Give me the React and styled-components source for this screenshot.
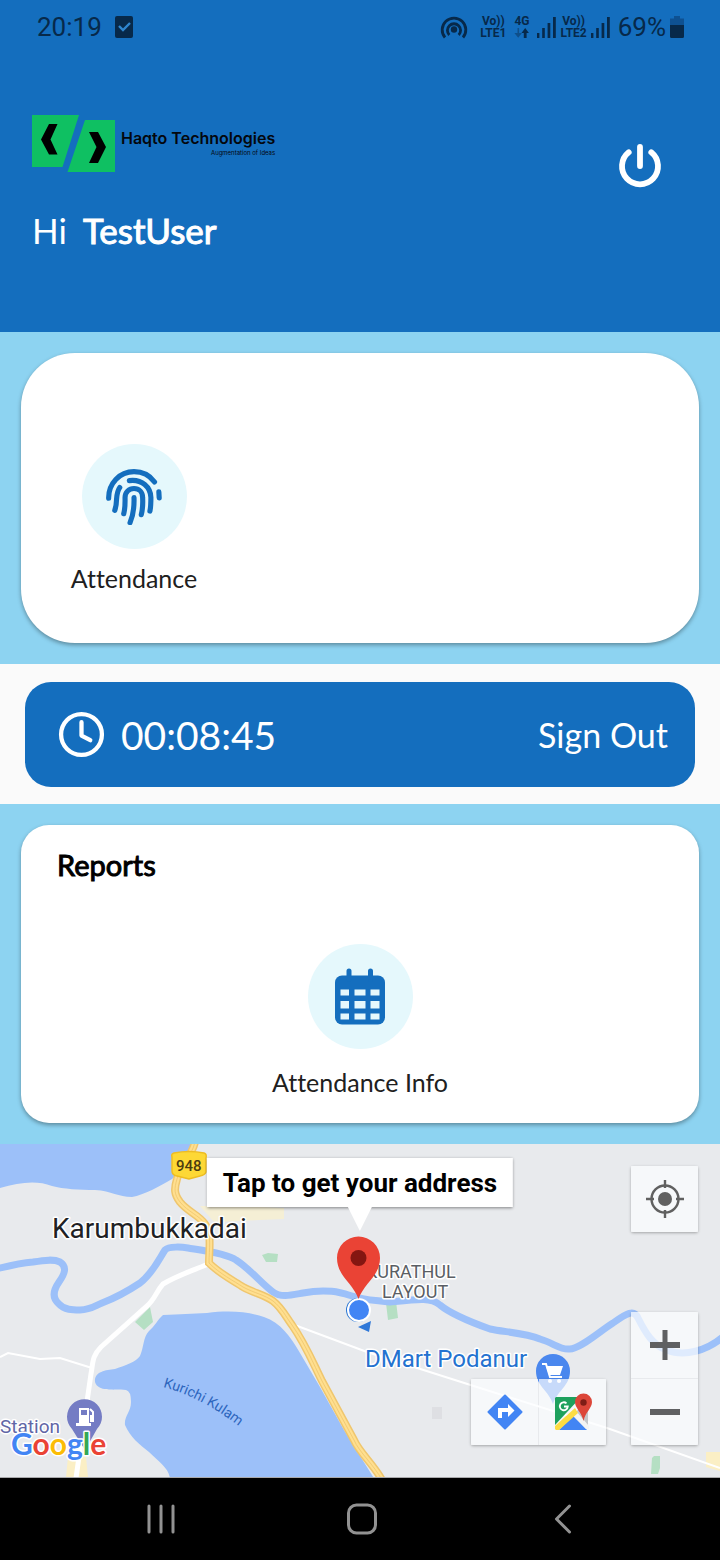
import React from "react";
import styled, { createGlobalStyle } from "styled-components";

const blue = "#146ebe";
const sky = "#8dd3f1";
const ink = "#07294a";

const GlobalStyle = createGlobalStyle`
  * { box-sizing: border-box; }
  body {
    margin: 0;
    background: #fafafa;
    font-family: Lato, "Open Sans", sans-serif;
    font-variant-ligatures: none;
  }
  button { border: 0; padding: 0; background: none; color: inherit; font: inherit; font-variant-ligatures: none; cursor: pointer; }
  svg { display: block; }
  h1, h2, p { margin: 0; }
`;

const Screen = styled.div`
  display: flex;
  flex-direction: column;
  min-height: 100vh;
`;

const Hero = styled.header`
  background: ${blue};
  color: #fff;
  padding-bottom: 80px;
`;

const StatusBar = styled.div`
  display: flex;
  align-items: center;
  justify-content: space-between;
  height: 54px;
  padding: 0 36px 0 37px;
  color: ${ink};
  font-family: Roboto, sans-serif;
`;

const StatusGroup = styled.div`
  display: flex;
  align-items: center;
  gap: ${(p) => p.$gap}px;
`;

const StatusText = styled.span`
  font-size: 26px;
  line-height: 32px;
`;

const Network = styled.span`
  display: flex;
  flex-direction: column;
  align-items: center;
  font-size: 12px;
  font-weight: 700;
  line-height: 12px;
`;

const HeroBody = styled.div`
  display: flex;
  justify-content: space-between;
  align-items: flex-start;
  padding: 61px 56px 0 32px;
`;

const Brand = styled.div`
  display: flex;
  gap: 6px;
`;

const BrandText = styled.div`
  display: flex;
  flex-direction: column;
  align-items: flex-end;
  padding-top: 13px;
  color: #04070d;
`;

const BrandName = styled.span`
  font: 600 16px/21px Inter, sans-serif;
`;

const BrandLine = styled.span`
  font: 400 6px/8px Inter, sans-serif;
`;

const Greeting = styled.h1`
  margin-top: 35px;
  font-size: 35px;
  font-weight: 400;
  line-height: 44px;
`;

const UserName = styled.span`
  margin-left: 16px;
  -webkit-text-stroke: 1px #fff;
`;

const PowerButton = styled.button`
  margin-top: 27px;
`;

const Section = styled.section`
  padding: 21px;
  background: ${sky};
`;

const Card = styled.div`
  display: flex;
  flex-direction: column;
  height: ${(p) => p.$height}px;
  border-radius: ${(p) => p.$radius}px;
  background: #fff;
  box-shadow: 0 2px 4px rgba(0, 0, 0, 0.35);
`;

const CardTitle = styled.h2`
  padding: 22px 36px 0;
  color: #000;
  font-size: 29px;
  font-weight: 400;
  line-height: 36px;
  -webkit-text-stroke: 1px #000;
`;

const Tile = styled.button`
  display: flex;
  flex-direction: column;
  align-items: center;
  align-self: ${(p) => p.$align};
  gap: ${(p) => p.$gap}px;
  width: 226px;
  margin-top: ${(p) => p.$top}px;
  color: #202020;
  font-size: 25px;
  line-height: 32px;
`;

const Disc = styled.span`
  display: grid;
  place-items: center;
  width: 105px;
  height: 105px;
  border-radius: 50%;
  background: #e5f8fc;
`;

const TimerStrip = styled.section`
  padding: 18px 25px 17px;
  background: #fafafa;
`;

const TimerBar = styled.div`
  display: flex;
  align-items: center;
  justify-content: space-between;
  height: 105px;
  padding: 0 27px 0 32px;
  border-radius: 26px;
  background: ${blue};
  color: #fff;
`;

const Timer = styled.div`
  display: flex;
  align-items: center;
  gap: 15px;
  font-size: 39px;
  line-height: 48px;
`;

const SignOut = styled.button`
  font-size: 34px;
  line-height: 44px;
`;

const MapPanel = styled.section`
  position: relative;
  height: 334px;
  overflow: hidden;
  border-bottom: 1px solid #a9a9ab;
  background: #e8eaed;
`;

const MapDrawing = styled.svg`
  width: 100%;
  height: 333px;
  font-family: Roboto, sans-serif;
`;

const Callout = styled.button`
  position: absolute;
  top: 14px;
  left: 50%;
  padding: 9px 16px 7px;
  transform: translateX(-50%);
  background: #fff;
  box-shadow: 0 1px 3px rgba(0, 0, 0, 0.45);
  color: #000;
  font: 700 26px/33px Roboto, sans-serif;
  white-space: nowrap;

  &::after {
    content: "";
    position: absolute;
    top: 100%;
    left: 50%;
    border: solid transparent;
    border-width: 24px 12px 0;
    border-top-color: #fff;
    transform: translateX(-50%);
  }
`;

const Controls = styled.div`
  position: absolute;
  inset: 0;
  display: flex;
  flex-direction: column;
  align-items: flex-end;
  justify-content: space-between;
  padding: 22px 22px 32px;
  pointer-events: none;
`;

const ControlRow = styled.div`
  display: flex;
  align-items: flex-end;
  gap: 25px;
`;

const ControlGroup = styled.div`
  display: flex;
  flex-direction: ${(p) => (p.$vertical ? "column" : "row")};
  gap: 1px;
  border-radius: 2px;
  box-shadow: 0 1px 3px rgba(0, 0, 0, 0.3);
`;

const MapButton = styled.button`
  display: grid;
  place-items: center;
  width: 67px;
  height: 66px;
  background: rgba(252, 253, 255, 0.7);
  pointer-events: auto;
`;

const NavBar = styled.nav`
  display: grid;
  grid-template-columns: repeat(3, 1fr);
  place-items: center;
  flex: 1;
  min-height: 82px;
  padding: 0 56px 0 60px;
  background: #000;
`;

const TaskIcon = () => (
  <svg width="18" height="22" viewBox="0 0 18 22">
    <rect width="18" height="22" rx="2" fill={ink} />
    <path d="M4 10l4 4 7-7" fill="none" stroke="#2f86cf" strokeWidth="2.4" />
  </svg>
);

const HotspotIcon = () => (
  <svg width="28" height="24" viewBox="0 0 28 24" fill="none" stroke={ink} strokeWidth="2.8">
    <path d="M5 22.500A11.800 11.800 0 1 1 23 22.500" />
    <path d="M9.300 20A6.600 6.600 0 1 1 18.700 20" />
    <circle cx="14" cy="14.500" r="3.200" fill={ink} stroke="none" />
  </svg>
);

const SignalIcon = () => (
  <svg width="19" height="21" viewBox="0 0 19 21" fill={ink}>
    <path d="M0 16h2.400v5H0zM5.200 11h2.600v10H5.200zM10.600 6h2.700v15h-2.700zM16 0h2.800v21H16z" />
  </svg>
);

const ArrowsIcon = () => (
  <svg width="15" height="12" viewBox="0 0 15 12">
    <path d="M3.500 1h1.600v5H8l-3.800 4.800L.4 6h3.100z" fill="#0f4f8a" />
    <path d="M9.800 11h2.800V6h2.300L11.200 1 7.500 6h2.300z" fill={ink} />
  </svg>
);

const BatteryIcon = () => (
  <svg width="14" height="22" viewBox="0 0 14 22">
    <path d="M4 0h6v2.500h4V9H0V2.500h4z" fill="#0e5192" />
    <path d="M0 9h14v11.500a1.500 1.500 0 0 1-1.500 1.500h-11A1.500 1.500 0 0 1 0 20.500z" fill={ink} />
  </svg>
);

const LogoMark = () => (
  <svg width="83" height="58" viewBox="0 0 83 58">
    <path d="M0 0h47L30.500 52H0z" fill="#0fc062" />
    <path d="M53 5h30v52H35.500z" fill="#0fc062" />
    <path d="M17 9h8.500l-7 15.500 7 15H17L9 24.500z" fill="#000" />
    <path d="M57 17h9l8 15-8 16h-9l7.500-16z" fill="#000" />
  </svg>
);

const PowerIcon = () => (
  <svg width="48" height="48" viewBox="0 0 48 48" fill="none" stroke="#fff" strokeWidth="5.800" strokeLinecap="round">
    <path d="M12.700 10.300a18 18 0 1 0 22.600 0" />
    <path d="M24 5v19" />
  </svg>
);

const FingerprintIcon = () => (
  <svg width="56" height="56" viewBox="258 146 168 169" fill="none" stroke={blue} strokeWidth="15.500" strokeLinecap="round">
    <path d="M265.500 234C265 190 298 154 342 154C368 154 390 166 404 185" />
    <path d="M417 215l1 18" />
    <path d="M328 181C366 176 392 201 393 232C393 246 393 260 390 273" />
    <path d="M299 202C290 214 290 230 289 242C289 253 287 262 284 271" />
    <path d="M311 281C316 262 315 247 315 232C315 216 327 205 342 205C357 205 368 216 368 232C369 250 368 268 364 284" />
    <path d="M342 232C343 262 338 290 330 308" />
  </svg>
);

const CalendarIcon = () => (
  <svg width="50" height="57" viewBox="0 0 50 57">
    <rect y="7.500" width="50" height="49" rx="7" fill={blue} />
    <path d="M14 3v8M35.500 3v8" stroke={blue} strokeWidth="5" strokeLinecap="round" />
    <g fill="#e5f8fc">
      {[21.5, 33, 45.5].map((y) => (
        <path key={y} d={`M5.500 ${y}h8.500v${y === 33 ? 7.5 : 6}h-8.500zM19.500 ${y}h11v${y === 33 ? 7.5 : 6}h-11zM35.500 ${y}h9v${y === 33 ? 7.5 : 6}h-9z`} />
      ))}
    </g>
  </svg>
);

const ClockIcon = () => (
  <svg width="49" height="49" viewBox="0 0 24 24" fill="none" stroke="#fff" strokeWidth="2.100" strokeLinecap="round" strokeLinejoin="round">
    <circle cx="12" cy="12" r="10" />
    <path d="M12 6v6.500l4.300 2.300" />
  </svg>
);

const LocateIcon = () => (
  <svg width="38" height="38" viewBox="0 0 38 38" fill="none" stroke="#606060" strokeWidth="2.400">
    <circle cx="19" cy="19" r="13.500" />
    <circle cx="19" cy="19" r="7" fill="#606060" stroke="none" />
    <path d="M19 0v8M19 30v8M0 19h8M30 19h8" />
  </svg>
);

const ZoomIcon = ({ plus }) => (
  <svg width="30" height="30" viewBox="0 0 30 30" fill="#5f6062">
    <path d="M0 12h30v6H0z" />
    {plus && <path d="M12.500 0h5v30h-5z" />}
  </svg>
);

const DirectionsIcon = () => (
  <svg width="36" height="36" viewBox="0 0 36 36">
    <path d="M18 1.500L34.500 18 18 34.500 1.500 18z" fill="#4285f4" stroke="#4285f4" strokeWidth="2" strokeLinejoin="round" />
    <path d="M11 24V14h10v-4l6.500 6.500L21 23v-5h-6v6z" fill="#fff" />
  </svg>
);

const GoogleMapsIcon = () => (
  <svg width="38" height="38" viewBox="0 0 38 38">
    <path d="M2 4h25L1 32V5z" fill="#1fa15d" />
    <path d="M26 14h8v21L20 22z" fill="#c4c6ca" />
    <path d="M19 22l14 15H5z" fill="#4285f4" />
    <path d="M22 18L35 33v3h-3L18 22z" fill="#f3f3f3" />
    <path d="M21 15l3 5L5 37H2l-1-1v-3z" fill="#fcdc42" />
    <path d="M12.500 10.300a4 4 0 1 0 1.300 3.200H10" fill="none" stroke="#fff" strokeWidth="1.800" />
    <path d="M21 9a8.500 8.500 0 0 1 17 0c0 6-6.500 10-8.500 19C27.500 19 21 15 21 9z" fill="#dc4639" />
    <circle cx="29.500" cy="9.500" r="3.200" fill="#7f1d16" />
  </svg>
);

const river =
  "M-4 125C12 121 22 119 33 118C45 116 54 115 60 118C68 123 64 131 59 138C52 148 53 155 59 160C64 166 73 166 80 166C90 166 95 162 102 159C115 154 128 147 140 139C153 129 159 115 165 106C169 102 182 103 188 104C200 106 226 109 236 116C250 125 262 140 273 148C281 154 292 151 303 149C328 144 342 149 352 152C362 156 372 156 390 158C418 155 431 153 440 161C452 171 476 180 490 185C504 188 526 189 540 195C553 199 561 206 569 205C579 206 600 187 613 179C627 169 634 165 638 174C645 188 653 202 667 206C684 213 707 207 724 192";
const highway =
  "M195 -2C192 12 180 22 177 35C174 45 174 50 180 58C188 68 199 71 205 80C212 90 209 105 209 119C220 130 234 137 243 143C254 149 265 151 273 157C282 164 286 173 292 181C306 201 313 219 322 237L354 296C359 308 374 321 382 336";
const lake =
  "M163 171C180 170 192 170 207 169C230 166 250 168 264 173C281 179 290 192 300 209L320 243L344 286L375 336H170C170 325 160 319 149 308C140 301 130 293 125 281C124 272 131 268 131 258Q131 247 126 246C113 245 98 248 95 238C94 228 105 226 115 225C126 221 136 218 140 212C144 203 143 193 149 187C155 182 158 175 163 171Z";

const MapArtwork = () => (
  <MapDrawing viewBox="0 0 720 333" preserveAspectRatio="xMidYMid slice" role="img" aria-label="Map around Karumbukkadai">
    <path d="M200 62Q240 62 284 64V75L214 78Z" fill="#f5efd5" />
    <path d="M706 308h14v19l-14-4zM68 313h18l2 20H66z" fill="#fbefc5" />
    <path d="M0 0H194L186 22L172 35C160 42 144 51 132 53C118 53 112 47 95 46C80 46 63 45 52 42C37 36 20 38 0 44Z" fill="#9cc0f9" />
    <g fill="#b5dfc3">
      <path d="M135 178l15-15 3 15-9 8zM262 111l6-2 10 1-1 8-11 0zM386 159l10-2 2 17-10 2zM652 314l2-2h6v12l-2 6h-7z" />
    </g>
    <path d="M432 263h10v12h-10z" fill="#dedfe3" />
    <path d={lake} fill="#9cc0f9" />
    <path d={river} fill="none" stroke="#9cc0f9" strokeWidth="7" />
    <g fill="none" stroke="#fff">
      <path d="M208 120C192 127 178 131 163 140C156 148 155 155 147 162L101 203C92 212 93 219 91 230L76 334" strokeWidth="5" />
      <path d="M0 213L8 209L40 215L60 214L92 224" strokeWidth="2" />
      <path d="M292 180L367 208L480 244L607 284L720 324" strokeWidth="2" />
    </g>
    <path d={highway} fill="none" stroke="#efc66e" strokeWidth="8" />
    <path d={highway} fill="none" stroke="#ffdf8f" strokeWidth="5" />
    <path d={highway} fill="none" stroke="#f2cb76" strokeWidth="1" />

    <path d="M174 9Q189 6 204 9Q207 10 206 14V28Q205 31 200 32L189 35L177 32Q172 31 172 27V13Q171 10 174 9Z" fill="#fdd835" stroke="#eebd22" strokeWidth="1.500" />
    <text x="176" y="27" fontSize="15" fontWeight="500" fill="#4c3c10">948</text>

    <path d="M85 306L72 285A17.500 17.500 0 1 1 97 285Z" fill="#747cc4" />
    <g fill="#fff">
      <path d="M79 264h10v15h2v3H76v-3h3zM81 266v5h6v-5z" fillRule="evenodd" />
      <path d="M90 265l3 3v9h-2v-6" fill="none" stroke="#fff" strokeWidth="2" />
    </g>

    <g stroke="#fff" strokeWidth="3" strokeLinejoin="round" paintOrder="stroke">
      <text x="52" y="94" fontSize="28" fill="#202124">Karumbukkadai</text>
      <text x="0" y="289" fontSize="19" fill="#6166a6">Station</text>
      <text x="366" y="134" fontSize="18" fill="#5a5e64">KURATHUL</text>
      <text x="382" y="154" fontSize="18" fill="#5a5e64">LAYOUT</text>
      <text x="365" y="223" fontSize="24" fill="#2472d0">DMart Podanur</text>
    </g>
    <path id="lake-label" d="M163 243Q205 254 246 288" fill="none" />
    <text fontSize="14" fill="#2c65bd">
      <textPath href="#lake-label">Kurichi Kulam</textPath>
    </text>

    <path d="M553 260C549 247 536 242 536 227A17 17 0 1 1 570 227C570 242 557 247 553 260Z" fill="#4a87ee" />
    <path d="M546 222h17l-3 9h-11z" fill="#fff" />
    <path d="M542 220h4l4 13h12" fill="none" stroke="#fff" strokeWidth="2" />
    <circle cx="550" cy="237" r="2" fill="#fff" />
    <circle cx="559" cy="237" r="2" fill="#fff" />

    <path d="M358 183l13-6-2 11z" fill="#2f78d8" />
    <circle cx="358" cy="166" r="12" fill="#2875d3" />
    <circle cx="359" cy="166" r="11" fill="#4285f4" stroke="#fff" strokeWidth="2" />
    <path d="M358.500 155C353 139 337 132 337 114A21.500 21.500 0 0 1 380 114C380 132 364 139 358.500 155Z" fill="#ea4335" />
    <circle cx="358.500" cy="114" r="8" fill="#841611" />

    <text x="11" y="311" fontFamily="Lato, sans-serif" fontSize="30" fontWeight="700" stroke="#fff" strokeWidth="3" strokeLinejoin="round" paintOrder="stroke">
      <tspan fill="#4285f4">G</tspan>
      <tspan fill="#ea4335">o</tspan>
      <tspan fill="#fbbc05">o</tspan>
      <tspan fill="#4285f4">g</tspan>
      <tspan fill="#34a853">l</tspan>
      <tspan fill="#ea4335">e</tspan>
    </text>
  </MapDrawing>
);

export default function App() {
  return (
    <Screen>
      <GlobalStyle />
      <Hero>
        <StatusBar>
          <StatusGroup $gap={13}>
            <StatusText>20:19</StatusText>
            <TaskIcon />
          </StatusGroup>
          <StatusGroup $gap={8}>
            <StatusGroup $gap={12}>
              <HotspotIcon />
              <Network><span>Vo))</span><span>LTE1</span></Network>
            </StatusGroup>
            <Network><span>4G</span><ArrowsIcon /></Network>
            <StatusGroup $gap={4}>
              <SignalIcon />
              <Network><span>Vo))</span><span>LTE2</span></Network>
              <SignalIcon />
            </StatusGroup>
            <StatusGroup $gap={4}>
              <StatusText>69%</StatusText>
              <BatteryIcon />
            </StatusGroup>
          </StatusGroup>
        </StatusBar>
        <HeroBody>
          <div>
            <Brand>
              <LogoMark />
              <BrandText>
                <BrandName>Haqto Technologies</BrandName>
                <BrandLine>Augmentation of Ideas</BrandLine>
              </BrandText>
            </Brand>
            <Greeting>Hi<UserName>TestUser</UserName></Greeting>
          </div>
          <PowerButton aria-label="Log out"><PowerIcon /></PowerButton>
        </HeroBody>
      </Hero>

      <Section>
        <Card $height={290} $radius={54}>
          <Tile $align="flex-start" $top={91} $gap={13}>
            <Disc><FingerprintIcon /></Disc>
            Attendance
          </Tile>
        </Card>
      </Section>

      <TimerStrip>
        <TimerBar>
          <Timer><ClockIcon />00:08:45</Timer>
          <SignOut>Sign Out</SignOut>
        </TimerBar>
      </TimerStrip>

      <Section>
        <Card $height={298} $radius={28}>
          <CardTitle>Reports</CardTitle>
          <Tile $align="center" $top={61} $gap={17}>
            <Disc><CalendarIcon /></Disc>
            Attendance Info
          </Tile>
        </Card>
      </Section>

      <MapPanel>
        <MapArtwork />
        <Callout>Tap to get your address</Callout>
        <Controls>
          <ControlGroup>
            <MapButton aria-label="My location"><LocateIcon /></MapButton>
          </ControlGroup>
          <ControlRow>
            <ControlGroup>
              <MapButton aria-label="Directions"><DirectionsIcon /></MapButton>
              <MapButton aria-label="Open in Google Maps"><GoogleMapsIcon /></MapButton>
            </ControlGroup>
            <ControlGroup $vertical>
              <MapButton aria-label="Zoom in"><ZoomIcon plus /></MapButton>
              <MapButton aria-label="Zoom out"><ZoomIcon /></MapButton>
            </ControlGroup>
          </ControlRow>
        </Controls>
      </MapPanel>

      <NavBar>
        <button aria-label="Recent apps">
          <svg width="28" height="30" viewBox="0 0 28 30" stroke="#929292" strokeWidth="3" strokeLinecap="round">
            <path d="M2 2v26M14 2v26M26 2v26" />
          </svg>
        </button>
        <button aria-label="Home">
          <svg width="32" height="32" viewBox="0 0 32 32" fill="none" stroke="#929292" strokeWidth="3">
            <rect x="2.500" y="2" width="27" height="28" rx="8" />
          </svg>
        </button>
        <button aria-label="Back">
          <svg width="18" height="30" viewBox="0 0 18 30" fill="none" stroke="#929292" strokeWidth="3" strokeLinecap="round" strokeLinejoin="round">
            <path d="M15.500 2L2.500 15l13 13" />
          </svg>
        </button>
      </NavBar>
    </Screen>
  );
}
